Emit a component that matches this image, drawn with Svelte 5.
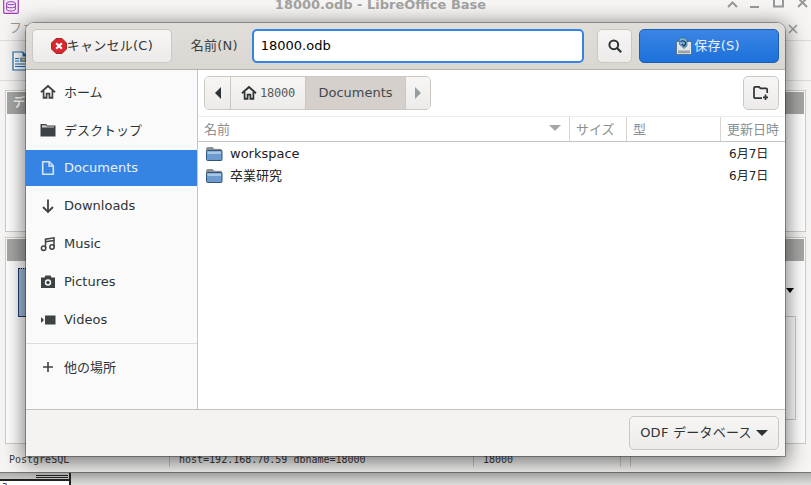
<script lang="ts">
	interface Place {
		label: string
		icon: string
		active?: boolean
	}

	const places: Array<Place> = [
		{ label: 'ホーム', icon: 'home' },
		{ label: 'デスクトップ', icon: 'desktop' },
		{ label: 'Documents', icon: 'doc', active: true },
		{ label: 'Downloads', icon: 'down' },
		{ label: 'Music', icon: 'music' },
		{ label: 'Pictures', icon: 'camera' },
		{ label: 'Videos', icon: 'video' }
	]

	const files = [
		{ name: 'workspace', date: '6月7日' },
		{ name: '卒業研究', date: '6月7日' }
	]
</script>

{#snippet homeIcon()}
	<svg width="16" height="16" viewBox="0 0 16 16">
		<path d="M1 8.2 8 2 15 8.2" fill="none" stroke="currentColor" stroke-width="1.9" />
		<path d="M3.6 7V14H6.6V9.6H9.4V14H12.4V7" fill="none" stroke="currentColor" stroke-width="1.7" />
		<path d="M3 13.4H7M9 13.4H13" stroke="currentColor" stroke-width="1.4" />
	</svg>
{/snippet}

{#snippet folderIcon()}
	<svg class="folder" width="17" height="16" viewBox="0 0 17 16">
		<path d="M0.5 2.8C0.5 2 1 1.5 1.8 1.5H6.5L8.5 3.3H14.5C15.3 3.3 15.7 3.8 15.7 4.5V6H0.5Z" fill="#8f8f8f" stroke="#777" stroke-width="0.7" />
		<rect x="0.5" y="4.5" width="15.5" height="10" rx="1" fill="#6d9bcf" stroke="#30557f" />
		<rect x="1.5" y="5.5" width="13.5" height="2.5" fill="#a9c6e4" />
	</svg>
{/snippet}

<div class="screen">
	<header class="titlebar">
		<span class="appIcon">
			<svg width="16" height="14" viewBox="0 0 16 14">
				<rect x="0.7" y="-2" width="14.6" height="15.3" rx="1" fill="#f4e8f6" stroke="#9a3fb5" stroke-width="1.2" />
				<ellipse cx="8" cy="3.2" rx="4.4" ry="1.5" fill="none" stroke="#9a3fb5" />
				<path d="M3.6 3.2V9.2C3.6 11.6 12.4 11.6 12.4 9.2V3.2M3.6 6.2C3.6 8.3 12.4 8.3 12.4 6.2" fill="none" stroke="#9a3fb5" />
			</svg>
		</span>
		<span class="windowTitle">18000.odb - LibreOffice Base</span>
		<span class="controls">
			<svg width="84" height="14" viewBox="0 0 84 14">
				<path d="M1 7 5.5 2.5 10 7" fill="none" stroke="#999" stroke-width="2" />
				<path d="M23 7H32" stroke="#999" stroke-width="2" />
				<rect x="47" y="-3" width="9" height="9.5" fill="none" stroke="#999" stroke-width="2" />
				<path d="M71 -2 80 7M80 -2 71 7" stroke="#999" stroke-width="2" />
			</svg>
		</span>
	</header>

	<div class="menubar">
		<span>ファイル</span>
		<svg class="menuClose" width="10" height="10" viewBox="0 0 10 10">
			<path d="M1 1 9 9M9 1 1 9" stroke="#9a9a98" stroke-width="1.6" />
		</svg>
	</div>

	<div class="toolbar">
		<svg width="16" height="20" viewBox="0 0 16 20">
			<path d="M1 1H10.5L15 5.5V19H1Z" fill="#fff" stroke="#1c6fb5" stroke-width="1.2" />
			<path d="M10.5 1V5.5H15Z" fill="#1c6fb5" />
			<path d="M3 7.5H7M3 10H7M3 13H13M3 15.5H13" stroke="#1c6fb5" />
			<rect x="8" y="6.5" width="6" height="4.5" fill="#6c9fcb" />
			<rect x="10" y="7.5" width="3" height="2" fill="#e2b35c" />
		</svg>
	</div>

	<main class="workspace">
		<div class="pane upper">
			<div class="paneHead">データベース</div>
		</div>
		<div class="pane lower">
			<div class="paneHead"></div>
			<div class="paneBody">
				<div class="selected"></div>
				<span class="paneArrow"></span>
				<div class="inner"></div>
			</div>
		</div>
	</main>

	<footer class="statusbar">
		<span class="cell first">PostgreSQL</span>
		<span class="cell second">host=192.168.70.59 dbname=18000</span>
		<span class="cell third">18000</span>
		<span class="cell"></span>
	</footer>

	<div class="taskbar">
		<div class="task">
			<div class="taskLines"></div>
			<div class="taskBox">a</div>
		</div>
	</div>

	<!-- save dialog lies over the main window -->
	<section class="dialog">
		<div class="headerbar">
			<button class="btn cancel">
				<svg width="16" height="16" viewBox="0 0 16 16">
					<path d="M5 0.5H11L15.5 5V11L11 15.5H5L0.5 11V5Z" fill="#d9262c" stroke="#8f1417" stroke-width="0.8" />
					<path d="M5.2 5.2 10.8 10.8M10.8 5.2 5.2 10.8" stroke="#fff" stroke-width="2.2" />
				</svg>
				<span class="barText">キャンセル(C)</span>
			</button>
			<label class="nameLabel barText" for="nameEntry">名前(N)</label>
			<input id="nameEntry" class="nameEntry" value="18000.odb" />
			<button class="btn search" aria-label="検索">
				<svg width="16" height="16" viewBox="0 0 16 16">
					<circle cx="6.8" cy="6.8" r="4.4" fill="none" stroke="#2e3436" stroke-width="2" />
					<path d="M10 10 14.2 14.2" stroke="#2e3436" stroke-width="2.2" />
				</svg>
			</button>
			<button class="btn save">
				<svg width="16" height="18" viewBox="0 0 16 18">
					<rect x="0.5" y="4.5" width="15" height="13" fill="#e3e6e6" stroke="#56768f" />
					<rect x="2" y="13.5" width="12" height="2.8" fill="#9aa3a5" />
					<path d="M3 1H9L11 3V9L8 11.5 3.5 7.5Z" fill="#7fb0d6" stroke="#2f5f88" stroke-width="0.6" />
					<path d="M4.5 4.5C7.5 3 10 4.5 9.6 7L8 9 5.8 7" fill="none" stroke="#173e5f" stroke-width="1.3" />
				</svg>
				<span class="barText">保存(S)</span>
			</button>
		</div>

		<div class="dialogBody">
			<nav class="sidebar">
				{#each places as place}
					<div class="place" class:active={place.active}>
						<span class="placeIcon">
							{#if place.icon === 'home'}
								{@render homeIcon()}
							{:else if place.icon === 'desktop'}
								<svg width="16" height="16" viewBox="0 0 16 16">
									<path d="M0.5 2H6L7.5 3.5H15.5V14.5H0.5Z" fill="currentColor" />
									<path d="M2 3.3H6L7 4.6H14V5.4H2Z" fill="#fafafa" opacity="0.75" />
								</svg>
							{:else if place.icon === 'doc'}
								<svg width="16" height="16" viewBox="0 0 16 16">
									<path d="M2.7 1.7H9.3L13.3 5.7V14.3H2.7Z" fill="none" stroke="currentColor" stroke-width="1.6" stroke-linejoin="round" />
									<path d="M9 2V6H13" fill="none" stroke="currentColor" stroke-width="1.4" />
								</svg>
							{:else if place.icon === 'down'}
								<svg width="16" height="16" viewBox="0 0 16 16">
									<path d="M8 1.5V14M3 9 8 14 13 9" fill="none" stroke="currentColor" stroke-width="1.8" />
								</svg>
							{:else if place.icon === 'music'}
								<svg width="16" height="16" viewBox="0 0 16 16">
									<path d="M5.5 12V3.2L14 1.8V10.5M5.5 5.8 14 4.4" fill="none" stroke="currentColor" stroke-width="1.5" />
									<circle cx="3.6" cy="12.3" r="2.2" fill="none" stroke="currentColor" stroke-width="1.5" />
									<circle cx="12" cy="11" r="2.2" fill="none" stroke="currentColor" stroke-width="1.5" />
								</svg>
							{:else if place.icon === 'camera'}
								<svg width="16" height="16" viewBox="0 0 16 16">
									<path d="M1 3.5H4.5L5.5 1.5H10.5L11.5 3.5H15V14H1Z" fill="currentColor" />
									<circle cx="8" cy="8.5" r="3.2" fill="#fafafa" />
									<circle cx="8" cy="8.5" r="1.7" fill="currentColor" />
								</svg>
							{:else}
								<svg width="16" height="16" viewBox="0 0 16 16">
									<rect x="5" y="3.5" width="10.5" height="9" fill="currentColor" />
									<path d="M1 5 4 8 1 11Z" fill="currentColor" />
								</svg>
							{/if}
						</span>
						<span>{place.label}</span>
					</div>
				{/each}
				<div class="separator"></div>
				<div class="place">
					<span class="placeIcon">
						<svg width="16" height="16" viewBox="0 0 16 16">
							<path d="M8 3V13M3 8H13" stroke="currentColor" stroke-width="1.6" />
						</svg>
					</span>
					<span>他の場所</span>
				</div>
			</nav>

			<div class="browser">
				<div class="pathbar">
					<div class="crumbs">
						<button class="crumb arrow" aria-label="戻る"><span class="triLeft"></span></button>
						<button class="crumb home">{@render homeIcon()}<span class="mono">18000</span></button>
						<button class="crumb current">Documents</button>
						<button class="crumb arrow end" aria-label="進む"><span class="triRight"></span></button>
					</div>
					<button class="btn newFolder" aria-label="新しいフォルダー">
						<svg width="16" height="16" viewBox="0 0 16 16">
							<path d="M9 13.2H2.2C1.5 13.2 1 12.7 1 12V3C1 2.3 1.5 1.8 2.2 1.8H6L7.5 3.4H13C13.7 3.4 14.2 3.9 14.2 4.6V8" fill="none" stroke="#2e3436" stroke-width="1.7" />
							<path d="M12.5 9.5V15M10 12.3H15" stroke="#2e3436" stroke-width="1.7" />
						</svg>
					</button>
				</div>

				<div class="columns">
					<div class="col colName"><span>名前</span><span class="sortArrow"></span></div>
					<div class="col colSize">サイズ</div>
					<div class="col colType">型</div>
					<div class="col colDate">更新日時</div>
				</div>

				<div class="rows">
					{#each files as file}
						<div class="row">
							<div class="rowName">{@render folderIcon()}<span>{file.name}</span></div>
							<div class="rowDate">{file.date}</div>
						</div>
					{/each}
				</div>
			</div>
		</div>

		<div class="dialogFooter">
			<button class="btn filter"><span class="barText">ODF データベース</span><span class="triDown"></span></button>
		</div>
	</section>
</div>

<style>
	:global(body) {
		margin: 0;
		background: #f6f5f4;
	}

	.screen {
		position: relative;
		width: 811px;
		height: 485px;
		overflow: hidden;
		display: flex;
		flex-direction: column;
		background: #f6f5f4;
		font-family: 'DejaVu Sans', 'Noto Sans CJK JP', sans-serif;
		font-size: 13px;
		color: #2e3436;
	}

	.titlebar {
		height: 16px;
		flex: none;
		display: flex;
		align-items: flex-start;
		justify-content: center;
		position: relative;
	}

	.appIcon {
		position: absolute;
		left: 3px;
		top: 0;
		height: 14px;
		overflow: hidden;
	}

	.windowTitle {
		font-weight: bold;
		font-size: 13px;
		line-height: 14px;
		color: #a3a3a1;
		margin-right: 50px;
		margin-top: -2px;
	}

	.controls {
		position: absolute;
		left: 727px;
		top: 0;
		height: 14px;
	}

	.menubar {
		height: 25px;
		flex: none;
		display: flex;
		align-items: center;
		justify-content: space-between;
		padding: 0 0 3px 9px;
		border-bottom: 1px solid #dedcd9;
		color: #9a9a98;
		box-sizing: border-box;
	}

	.menuClose {
		margin-right: 13px;
		margin-top: 4px;
	}

	.toolbar {
		height: 40px;
		flex: none;
		box-sizing: border-box;
		padding: 10px 0 0 12px;
		border-bottom: 1px solid #dedcd9;
	}

	.workspace {
		flex: 1;
		min-height: 0;
		padding: 9px 5px 9px 5px;
		display: flex;
		flex-direction: column;
		gap: 5px;
	}

	.pane {
		border: 1px solid #cfcbc5;
		padding: 1px;
		display: flex;
		flex-direction: column;
		background: #fff;
		box-sizing: border-box;
	}

	.upper {
		height: 142px;
		flex: none;
	}

	.lower {
		flex: 1;
	}

	.paneHead {
		height: 22px;
		background: #a7a7a5;
		color: #fff;
		font-weight: bold;
		font-size: 12px;
		padding: 0 6px;
		line-height: 22px;
		flex: none;
	}

	.paneBody {
		flex: 1;
		position: relative;
	}

	.selected {
		position: absolute;
		left: 11px;
		top: 7px;
		width: 60px;
		height: 49px;
		background: #a4bbd8;
		border: 1px solid #1d3f73;
		border-top: 1px dotted #111;
		box-sizing: border-box;
	}

	.paneArrow {
		position: absolute;
		left: 779px;
		top: 27px;
		border-left: 4px solid transparent;
		border-right: 4px solid transparent;
		border-top: 5px solid #000;
	}

	.inner {
		position: absolute;
		right: 8px;
		top: 55px;
		bottom: 22px;
		width: 100px;
		border: 1px solid #cfcbc5;
	}

	.statusbar {
		height: 19px;
		flex: none;
		display: flex;
		align-items: flex-start;
		font-family: 'DejaVu Sans Mono', monospace;
		font-size: 10px;
		color: #3a3a3a;
	}

	.cell {
		box-sizing: border-box;
		padding-left: 9px;
		border-right: 1px solid #cfcbc5;
		height: 13px;
		line-height: 11px;
		margin-top: 1px;
	}

	.first {
		width: 170px;
	}

	.second {
		width: 304px;
	}

	.third {
		width: 147px;
	}

	.taskbar {
		height: 13px;
		flex: none;
		background: linear-gradient(#b0b0ae, #dededa);
		border-top: 1px solid #777;
		box-sizing: border-box;
	}

	.task {
		width: 71px;
		height: 12px;
		border-right: 2px solid #222;
		box-sizing: border-box;
		display: flex;
		flex-direction: column;
	}

	.taskLines {
		height: 3px;
		margin: 2px 1px 1px 36px;
		border-top: 1px solid #222;
		border-bottom: 1px solid #222;
		box-sizing: border-box;
		flex: none;
	}

	.taskBox {
		flex: 1;
		border-top: 2px solid #222;
		font-size: 9px;
		line-height: 9px;
		font-family: 'DejaVu Sans Mono', monospace;
		color: #111;
		background: #fff;
		padding-left: 2px;
		overflow: hidden;
	}

	.dialog {
		position: absolute;
		left: 26px;
		top: 23px;
		width: 759px;
		height: 433px;
		display: flex;
		flex-direction: column;
		border-radius: 8px 8px 0 0;
		overflow: hidden;
		background: #f6f5f4;
		box-shadow: 0 4px 20px 3px rgba(0, 0, 0, 0.5), 0 0 0 1px rgba(0, 0, 0, 0.3);
	}

	.headerbar {
		height: 47px;
		flex: none;
		box-sizing: border-box;
		display: flex;
		align-items: center;
		padding: 0 6px;
		background: linear-gradient(#e1ded9, #dad6d1);
		border-bottom: 1px solid #b6b1aa;
	}

	.btn {
		font: inherit;
		color: #2e3436;
		border: 1px solid #cdc7c2;
		border-radius: 5px;
		background: linear-gradient(#f7f6f5, #edebe9);
		box-sizing: border-box;
		display: flex;
		align-items: center;
		justify-content: center;
		padding: 0;
	}

	.barText {
		padding-bottom: 3px;
		letter-spacing: 0.25px;
	}

	.cancel {
		width: 140px;
		height: 34px;
		gap: 0;
	}

	.nameLabel {
		margin-left: 19px;
		width: 61px;
		color: #3a3f41;
	}

	.nameEntry {
		width: 333px;
		height: 34px;
		box-sizing: border-box;
		border: 2px solid #3584e4;
		border-radius: 5px;
		font: inherit;
		font-size: 13px;
		color: #000;
		padding: 0 7px 1px;
		background: #fff;
		outline: none;
	}

	.search {
		width: 35px;
		height: 34px;
		margin-left: 13px;
	}

	.save {
		width: 140px;
		height: 34px;
		margin-left: 7px;
		gap: 2px;
		padding-right: 2px;
		color: #e8f0fa;
		background: linear-gradient(#3b85e5, #1c71da);
		border-color: #1b5fb5;
	}

	.dialogBody {
		flex: 1;
		min-height: 0;
		display: flex;
		background: #fff;
	}

	.sidebar {
		width: 172px;
		flex: none;
		box-sizing: border-box;
		background: #fafafa;
		border-right: 1px solid #c8c5c0;
		padding-top: 2px;
	}

	.place {
		height: 36px;
		margin-top: 2px;
		display: flex;
		align-items: center;
		padding-left: 14px;
		gap: 8px;
		padding-bottom: 1px;
		box-sizing: border-box;
		color: #2e3436;
	}

	.place.active {
		background: #3584e4;
		color: #e7f0fb;
	}

	.placeIcon {
		display: flex;
		width: 16px;
		height: 16px;
		color: #3d4244;
	}

	.active .placeIcon {
		color: #d6e5f8;
	}

	.separator {
		height: 1px;
		margin-top: 5px;
		margin-bottom: 5px;
		background: #dedddb;
	}

	.browser {
		flex: 1;
		min-width: 0;
		display: flex;
		flex-direction: column;
	}

	.pathbar {
		height: 47px;
		flex: none;
		box-sizing: border-box;
		display: flex;
		align-items: flex-start;
		justify-content: space-between;
		padding: 6px 6px 0;
		border-bottom: 1px solid #ececea;
	}

	.crumbs {
		display: flex;
		height: 34px;
		box-sizing: border-box;
		border: 1px solid #cdc7c2;
		border-radius: 5px;
		overflow: hidden;
	}

	.crumb {
		font: inherit;
		color: #2e3436;
		border: 0;
		border-right: 1px solid #cdc7c2;
		background: linear-gradient(#f7f6f5, #edebe9);
		padding: 0;
		display: flex;
		align-items: center;
		justify-content: center;
	}

	.arrow {
		width: 26px;
	}

	.arrow.end {
		width: 24px;
		border-right: 0;
	}

	.home {
		width: 75px;
		gap: 3px;
	}

	.mono {
		font-family: 'DejaVu Sans Mono', monospace;
		font-size: 12px;
		letter-spacing: -0.2px;
		color: #555a5c;
	}

	.current {
		width: 100px;
		background: #d5d0cc;
		color: #44494b;
		padding-bottom: 1px;
	}

	.triLeft {
		border-top: 6px solid transparent;
		border-bottom: 6px solid transparent;
		border-right: 6px solid #2e3436;
	}

	.triRight {
		border-top: 6px solid transparent;
		border-bottom: 6px solid transparent;
		border-left: 6px solid #9a9d9d;
	}

	.newFolder {
		width: 36px;
		height: 34px;
	}

	.columns {
		height: 25px;
		flex: none;
		box-sizing: border-box;
		display: flex;
		border-bottom: 1px solid #c8c5c0;
		color: #8d9091;
	}

	.col {
		box-sizing: border-box;
		padding: 0 0 2px 6px;
		border-right: 1px solid #d9d6d2;
		display: flex;
		align-items: center;
		justify-content: space-between;
	}

	.colName {
		width: 372px;
		padding-right: 8px;
	}

	.colSize {
		width: 57px;
	}

	.colType {
		width: 94px;
	}

	.colDate {
		flex: 1;
		border-right: 0;
		white-space: nowrap;
	}

	.sortArrow {
		border-left: 6px solid transparent;
		border-right: 6px solid transparent;
		border-top: 6px solid #a5a7a7;
	}

	.rows {
		flex: 1;
		padding-top: 1px;
	}

	.row {
		height: 22px;
		display: flex;
		align-items: center;
		justify-content: space-between;
		color: #222;
		line-height: 16px;
	}

	.rowName {
		display: flex;
		align-items: center;
		gap: 7px;
		padding-left: 8px;
	}

	.folder {
		flex: none;
	}

	.rowDate {
		width: 56px;
		font-size: 12px;
		flex: none;
	}

	.dialogFooter {
		height: 47px;
		flex: none;
		box-sizing: border-box;
		display: flex;
		align-items: center;
		justify-content: flex-end;
		padding: 0 6px;
		background: #f4f3f1;
		border-top: 1px solid #c8c2bc;
	}

	.filter {
		width: 150px;
		height: 34px;
		gap: 4px;
	}

	.triDown {
		border-left: 6px solid transparent;
		border-right: 6px solid transparent;
		border-top: 6px solid #2e3436;
	}
</style>
